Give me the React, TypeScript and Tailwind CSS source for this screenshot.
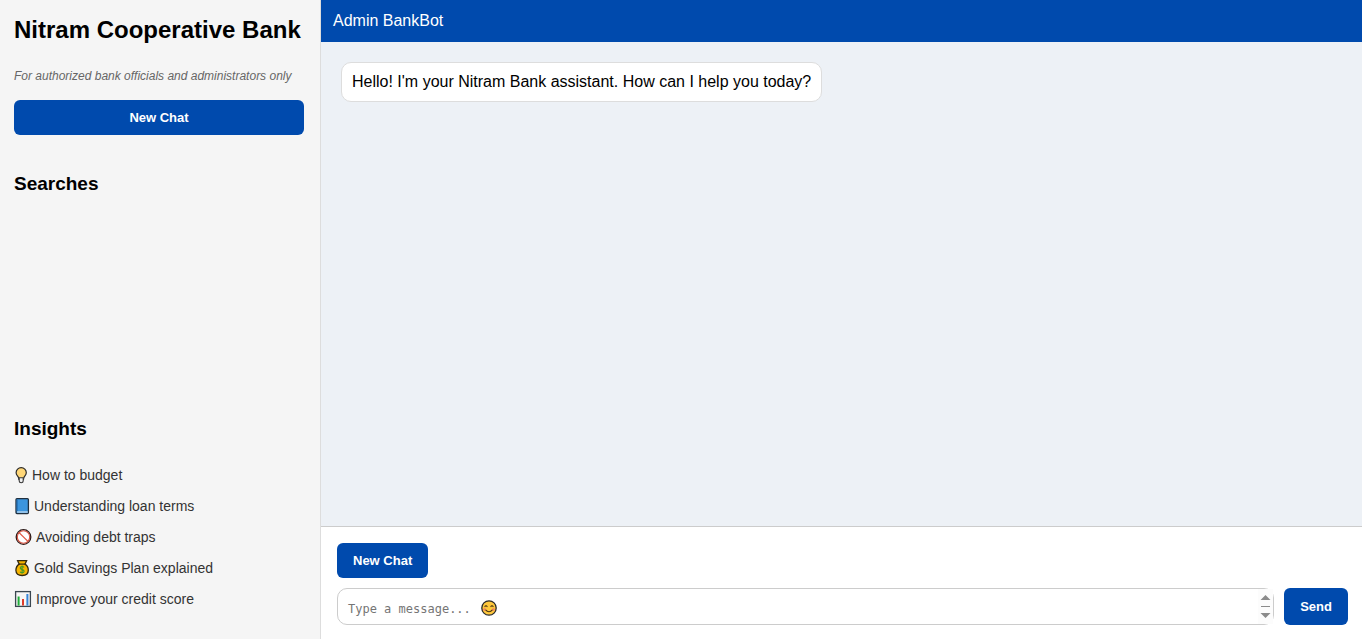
import { useState, type ReactNode } from 'react';

function BulbIcon() {
  return (
    <svg width="14" height="18" viewBox="0 0 14 18" aria-hidden="true">
      <path d="M7.2 1.6a5.1 5.1 0 0 0-5.1 5.1c0 1.8 1 2.8 1.9 4 .6.9.8 1.7.9 2.6h4.6c.1-.9.3-1.7.9-2.6.9-1.2 1.9-2.2 1.9-4a5.1 5.1 0 0 0-5.1-5.1z" fill="#ffd778" stroke="#2b2b2b" strokeWidth="1.2" />
      <path d="M5.2 11.8h4V15c0 1-.8 1.7-2 1.7s-2-.7-2-1.7z" fill="#f1f1f1" stroke="#3a3a3a" strokeWidth="1.1" />
    </svg>
  );
}

function BookIcon() {
  return (
    <svg width="16" height="18" viewBox="0 0 16 18" aria-hidden="true">
      <rect x="2" y="1.6" width="12.4" height="15" rx="1" fill="#3b95de" stroke="#20303f" strokeWidth="1.3" />
      <path d="M3.2 2.4v11.6" stroke="#2570b5" strokeWidth="1.2" />
      <path d="M3.2 15h10.6" stroke="#d9e8f5" strokeWidth="1.1" />
    </svg>
  );
}

function ProhibitedIcon() {
  return (
    <svg width="18" height="18" viewBox="0 0 18 18" aria-hidden="true">
      <circle cx="9.5" cy="9" r="7.3" fill="#ffffff" stroke="#2b1a18" strokeWidth="1.3" />
      <circle cx="9.5" cy="9" r="6.2" fill="none" stroke="#d8503f" strokeWidth="1.1" />
      <path d="M5.1 4.6l8.8 8.8" stroke="#e0533f" strokeWidth="1.3" />
    </svg>
  );
}

function MoneyBagIcon() {
  return (
    <svg width="16" height="18" viewBox="0 0 16 18" aria-hidden="true">
      <path d="M3.6 1.7h9L11 5.1c2.3 1.4 3.3 3.6 3.3 6.1 0 3.5-2.4 5.3-6.2 5.3s-6.2-1.8-6.2-5.3c0-2.5 1.2-4.7 3.3-6.1z" fill="#f7b500" stroke="#33290f" strokeWidth="1.3" />
      <path d="M4.8 5.1h6.6" stroke="#33290f" strokeWidth="1.2" />
      <path d="M10 8.5c-.4-.7-1-1-1.9-1-1.1 0-1.9.5-1.9 1.5 0 2.2 3.9 1 3.9 3.2 0 1-.8 1.6-2 1.6-.9 0-1.6-.3-2-1.1M8.1 6.5v8.2" fill="none" stroke="#3f9a28" strokeWidth="1.1" />
    </svg>
  );
}

function ChartIcon() {
  return (
    <svg width="18" height="18" viewBox="0 0 18 18" aria-hidden="true">
      <rect x="1.6" y="1.6" width="14.8" height="14.8" fill="#f6f6f6" stroke="#3a4650" strokeWidth="1.3" />
      <path d="M4.6 15.6V6.5" stroke="#1fae3a" strokeWidth="2" />
      <path d="M9 15.6V9" stroke="#dc3b2c" strokeWidth="2" />
      <path d="M13.4 15.6V4" stroke="#3886d8" strokeWidth="2" />
    </svg>
  );
}

function SmileIcon() {
  return (
    <svg width="18" height="18" viewBox="0 0 18 18" aria-hidden="true">
      <circle cx="9" cy="9" r="7.2" fill="#ffc83d" stroke="#2b2b2b" strokeWidth="1.3" />
      <circle cx="4.6" cy="10.6" r="1.4" fill="#f4845f" />
      <circle cx="13.4" cy="10.6" r="1.4" fill="#f4845f" />
      <path d="M4.9 7.6c.4-1.2 1.8-1.2 2.2 0M10.9 7.6c.4-1.2 1.8-1.2 2.2 0M5.9 11.1c1.4 2.1 4.8 2.1 6.2 0" fill="none" stroke="#4a3512" strokeWidth="1.1" strokeLinecap="round" />
    </svg>
  );
}

const insights: { label: string; icon: ReactNode }[] = [
  { label: 'How to budget', icon: <BulbIcon /> },
  { label: 'Understanding loan terms', icon: <BookIcon /> },
  { label: 'Avoiding debt traps', icon: <ProhibitedIcon /> },
  { label: 'Gold Savings Plan explained', icon: <MoneyBagIcon /> },
  { label: 'Improve your credit score', icon: <ChartIcon /> },
];

const button = 'rounded-md bg-[#004aad] px-4 text-[13px] font-bold text-white hover:bg-[#003b8a]';

const greeting = "Hello! I'm your Nitram Bank assistant. How can I help you today?";

export default function App() {
  const [draft, setDraft] = useState('');
  const [messages, setMessages] = useState<string[]>([greeting]);
  const reset = () => setMessages([greeting]);
  const send = () => {
    if (draft.trim()) setMessages([...messages, draft]);
    setDraft('');
  };

  return (
    <div className="flex h-screen bg-white font-['Liberation_Sans',Arial,sans-serif] text-base text-black">
      <aside className="flex w-[321px] shrink-0 flex-col border-r border-[#dddddd] bg-[#f5f5f5] pt-4 pr-4 pb-6 pl-3.5">
        <h1 className="text-2xl leading-7 font-bold whitespace-nowrap">Nitram Cooperative Bank</h1>
        <p className="mt-6 text-xs text-[#666666] italic">For authorized bank officials and administrators only</p>
        <button type="button" onClick={reset} className={`${button} mt-4 h-[35px] w-full shrink-0`}>New Chat</button>
        <section className="mt-9 flex-1">
          <h2 className="text-[19px] leading-[26px] font-bold">Searches</h2>
        </section>
        <section>
          <h2 className="text-[19px] leading-[26px] font-bold">Insights</h2>
          <ul className="mt-[17px] mb-px">
            {insights.map((item) => (
              <li key={item.label}>
                <a href="#" className="flex h-[31px] items-center gap-1 text-sm text-[#333333]">
                  {item.icon}
                  {item.label}
                </a>
              </li>
            ))}
          </ul>
        </section>
      </aside>

      <main className="flex min-w-0 flex-1 flex-col">
        <header className="bg-[#004aad] px-3 py-2 leading-[26px] text-white">Admin BankBot</header>
        <div className="flex flex-1 flex-col items-start gap-3 overflow-y-auto bg-[#edf1f6] p-5">
          {messages.map((message, i) => (
            <p key={i} className="rounded-[10px] border border-[#dddddd] bg-white p-2.5 leading-[18px]">{message}</p>
          ))}
        </div>
        <footer className="border-t border-[#cccccc] bg-white pt-4 pr-3.5 pb-3.5 pl-4">
          <button type="button" onClick={reset} className={`${button} block h-[35px]`}>New Chat</button>
          <form
            className="mt-2.5 flex gap-2.5"
            onSubmit={(e) => {
              e.preventDefault();
              send();
            }}
          >
            <div className="relative flex-1">
              <textarea
                aria-label="Message"
                rows={1}
                value={draft}
                onChange={(e) => setDraft(e.target.value)}
                placeholder="Type a message..."
                className="block h-[37px] w-full resize-none overflow-hidden rounded-[10px] border border-[#cccccc] bg-white py-2.5 pr-6 pl-2.5 font-['DejaVu_Sans_Mono',monospace] text-xs leading-5 placeholder:text-[#757575]"
              />
              {draft === '' && (
                <span className="pointer-events-none absolute top-[11px] left-[143px]">
                  <SmileIcon />
                </span>
              )}
              <svg className="pointer-events-none absolute top-px right-px" width="15" height="35" viewBox="0 0 15 35" aria-hidden="true">
                <rect width="15" height="35" fill="#fcfcfc" />
                <path d="M2.5 11L7.500 6l5 5zM2.500 24l5 5 5-5z" fill="#8b8b8b" />
                <path d="M3 17.5h9" stroke="#8b8b8b" />
              </svg>
            </div>
            <button type="submit" className={`${button} h-[37px]`}>Send</button>
          </form>
        </footer>
      </main>
    </div>
  );
}
